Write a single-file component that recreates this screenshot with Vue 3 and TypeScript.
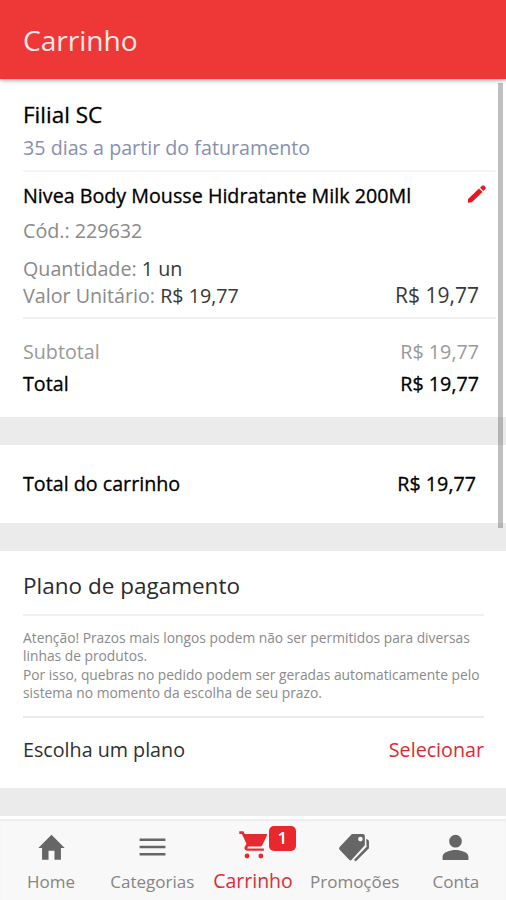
<script setup lang="ts">
interface Tab {
  id: string
  label: string
  path: string
  active?: boolean
  badge?: number
}

const price = 'R$ 19,77'

const tabs: Tab[] = [
  { id: 'home', label: 'Home', path: 'M9.700 21.500v-7h4.600v7h5V12.400h2.900L12 2.200 1.800 12.400h2.900v9.100z' },
  { id: 'categories', label: 'Categorias', path: 'M2 5h20v2H2zM2 10.6h20v2H2zM2 16.2h20v2H2z' },
  {
    id: 'cart',
    label: 'Carrinho',
    active: true,
    badge: 1,
    path: 'M7 18.200a1.900 1.900 0 1 0 0 3.800 1.900 1.900 0 0 0 0-3.800zM1 1v2h2l3.600 7.590-1.350 2.450c-.16.28-.25.61-.25.96 0 1.1.9 2 2 2h13v-1.700H7.420c-.14 0-.25-.11-.25-.25l.03-.12.9-1.130h8.950c.75 0 1.410-.41 1.750-1.030l3.580-7.590A.8.8 0 0 0 21.500 3H5.210l-.94-2zM17.700 18.200a1.900 1.900 0 1 0 0 3.800 1.900 1.900 0 0 0 0-3.800z',
  },
  {
    id: 'offers',
    label: 'Promoções',
    path: 'M10 1.5h8.5a1.5 1.5 0 0 1 1.5 1.5v7.3L9.8 21.5a1.3 1.3 0 0 1-1.9 0L.5 13.7a1.5 1.5 0 0 1 0-2zM16.6 3.7a1.8 1.8 0 1 0 0 3.6 1.8 1.8 0 0 0 0-3.6zM21 5.2l1.6 1a1.4 1.4 0 0 1 .6 1.2v5.1L13.1 22.6l-1.6-1L21.4 11.5z',
  },
  {
    id: 'account',
    label: 'Conta',
    path: 'M12 12a4.9 4.9 0 1 0 0-9.8 4.9 4.9 0 0 0 0 9.8zM12 14c-4 0-10 1.7-10 5v2.700h20V19c0-3.300-6-5-10-5z',
  },
]
</script>

<template>
  <div class="screen">
    <header class="header"><h1>Carrinho</h1></header>

    <main class="content">
      <section class="order">
        <h2 class="branch">Filial SC</h2>
        <p class="term">35 dias a partir do faturamento</p>
        <div class="item">
          <div class="row name">
            <strong>Nivea Body Mousse Hidratante Milk 200Ml</strong>
            <svg class="pencil" viewBox="0 0 18 18"><path d="M0 13.900 11 3.500 14.600 7.100 3.800 17.300 0 17.700zM12 2.700 14.100.8Q15.200-.2 16.200.8L17.400 2Q18.200 3 17.400 3.900L15.500 6z" /></svg>
          </div>
          <p class="muted code">Cód.: 229632</p>
          <p class="muted qty">Quantidade: <b>1 un</b></p>
          <div class="row unit muted">
            <span>Valor Unitário: <b>{{ price }}</b></span>
            <span class="amount">{{ price }}</span>
          </div>
        </div>
        <div class="row subtotal"><span>Subtotal</span><span>{{ price }}</span></div>
        <div class="row total"><strong>Total</strong><strong>{{ price }}</strong></div>
      </section>

      <section class="cart-total row">
        <strong>Total do carrinho</strong><strong>{{ price }}</strong>
      </section>

      <section class="payment">
        <h2 class="plan">Plano de pagamento</h2>
        <div class="notice">
          <p>Atenção! Prazos mais longos podem não ser permitidos para diversas</p>
          <p>linhas de produtos.</p>
          <p>Por isso, quebras no pedido podem ser geradas automaticamente pelo</p>
          <p>sistema no momento da escolha de seu prazo.</p>
        </div>
        <div class="row choose"><span>Escolha um plano</span><a class="select">Selecionar</a></div>
      </section>
      <div class="scrollbar"></div>
    </main>

    <nav class="tabs">
      <a v-for="tab in tabs" :key="tab.id" class="tab" :class="{ active: tab.active }">
        <span class="icon">
          <svg viewBox="0 0 24 24"><path fill-rule="evenodd" :d="tab.path" /></svg>
          <span v-if="tab.badge" class="badge">{{ tab.badge }}</span>
        </span>
        <span class="label">{{ tab.label }}</span>
      </a>
    </nav>
  </div>
</template>

<style>
body { margin: 0; background: #ebebeb; }
</style>

<style scoped>
.screen {
  display: flex; flex-direction: column; width: 506px; height: 900px; overflow: hidden;
  font-family: "Open Sans", "Noto Sans", sans-serif; font-size: 19.700px; line-height: 20px;
  color: #111; background: #ebebeb; white-space: nowrap;
}
h1, h2, p { margin: 0; font-weight: 400; }
b { font-weight: 400; color: #383838; }
strong { font-weight: 400; color: #000; -webkit-text-stroke: .3px #000; }
.row { display: flex; justify-content: space-between; }
.header {
  box-sizing: border-box; flex: none; height: 79px; padding: 25px 23px 0; background: #ed3837;
  box-shadow: 0 1px 5px rgba(0, 0, 0, .4); position: relative; z-index: 1;
}
h1 { font-size: 28.100px; line-height: 30px; color: #ffe9e7; }
.content { position: relative; flex: 1; display: flex; flex-direction: column; gap: 28px; }
section { box-sizing: border-box; background: #fff; }
.order { height: 338px; padding: 26px 10px 0 23px; }
.branch { font-size: 22.500px; height: 33px; color: #000; -webkit-text-stroke: .3px #000; }
.term { height: 32px; color: #8790ad; border-bottom: 2px solid #f4f4f4; }
.item { height: 147px; border-bottom: 2px solid #f1f1f1; padding-top: 14px; box-sizing: border-box; }
.name { height: 35px; }
.pencil { width: 18px; height: 18px; margin: -1px 10px 0 0; fill: #ea1720; }
.muted { color: #8a8a8a; }
.code { height: 38px; }
.qty { height: 27px; }
.unit { padding-right: 17px; }
.unit .amount { font-size: 21px; line-height: 18px; color: #383838; }
.subtotal { padding: 23px 17px 0 0; height: 32px; color: #999; }
.total { padding-right: 17px; }
.cart-total { height: 77.500px; padding: 29px 30px 0 23px; }
.payment { height: 237.500px; padding: 25px 22px 0 23px; }
.plan { font-size: 22.500px; height: 38px; border-bottom: 2px solid #f0f0f0; color: #2b2b2b; }
.notice { height: 102px; box-sizing: border-box; padding-top: 13.500px; border-bottom: 2px solid #ebebeb; font-size: 13.800px; line-height: 18.300px; color: #8a8a8a; }
.choose { padding-top: 22px; color: #303030; }
.select { color: #dd2932; }
.scrollbar { position: absolute; top: 4px; right: 3px; width: 5px; height: 445px; background: rgba(70, 70, 70, .34); }
.tabs { flex: none; display: grid; grid-template-columns: repeat(5, 1fr); height: 81px; background: #f8f8f8; border-top: 3px solid #fff; box-shadow: inset 0 2px 2px #eee; }
.tab { display: flex; flex-direction: column; align-items: center; color: #858585; font-size: 17px; }
.label { padding-left: 1px; }
.icon { position: relative; height: 53px; padding: 13px 0 0 1px; box-sizing: border-box; }
.icon svg { display: block; width: 31px; height: 31px; fill: #666; }
.active { color: #dc2c35; font-size: 19.500px; }
.active .label { padding: 0; }
.active .icon { height: 52px; padding-top: 11px; }
.active .icon svg { fill: #e52b32; }
.badge { position: absolute; left: 32px; top: 7px; width: 27px; height: 25px; border-radius: 5px; background: #e9272d; color: #fff; font-size: 17px; font-weight: 600; line-height: 24px; text-align: center; }
</style>
